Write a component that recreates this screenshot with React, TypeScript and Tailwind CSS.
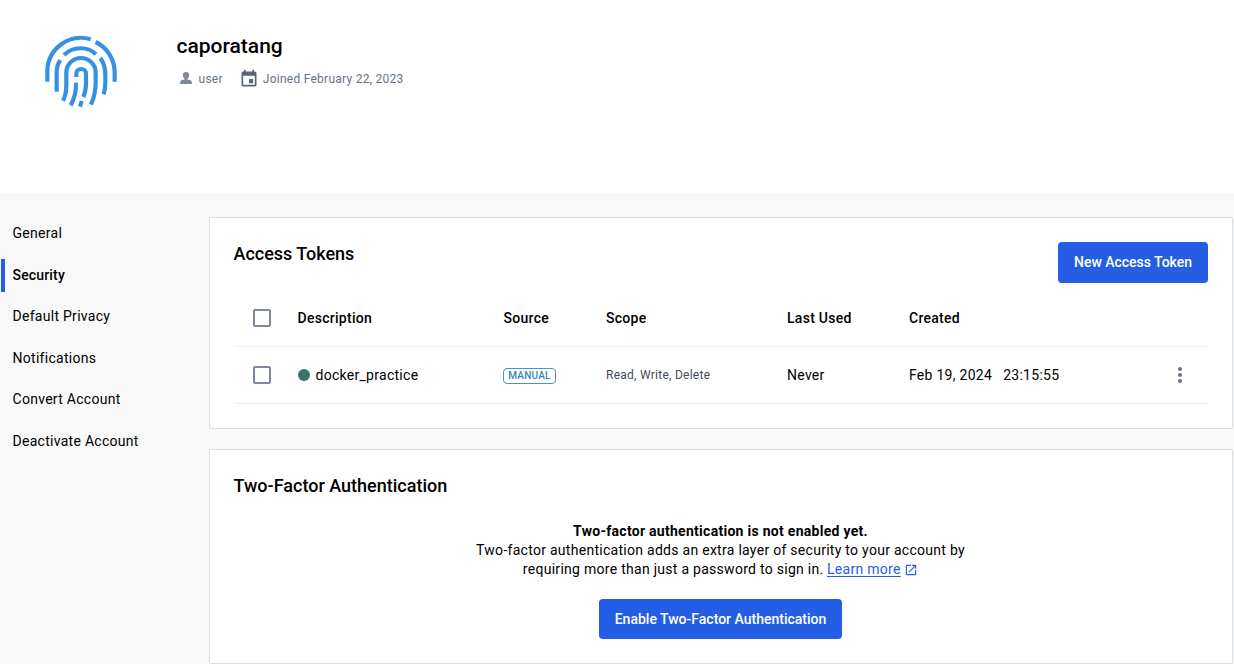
import type { ReactNode } from "react";
import { MdCheckBoxOutlineBlank, MdEvent, MdMoreVert, MdOpenInNew } from "react-icons/md";

const navItems = ["General", "Security", "Default Privacy", "Notifications", "Convert Account", "Deactivate Account"];

function Fingerprint() {
  return (
    <svg className="h-[76px] w-[76px]" viewBox="39 40 228 228" fill="none" stroke="#3590e6" strokeWidth="12.5">
      <path d="M52 186V155A101 101 0 0 1 182 59" />
      <path d="M197 67A101 101 0 0 1 254 155V186" />
      <path d="M102 106C128 80 173 79 198 104" />
      <path d="M91 122Q80 137 80 158V216" />
      <path d="M211 115C222 130 226 145 226 165V188Q226 208 221 224" />
      <path d="M99 243Q109 225 109 196V158A44 43 0 0 1 197 158V188C197 215 192 235 183 255" />
      <path d="M139 172V162A14.500 14 0 0 1 168 162V191Q168 215 160 232" />
      <path d="M138 189C139 218 133 238 122 257" />
      <path d="M155 244L150 261" />
    </svg>
  );
}

function UserIcon() {
  return (
    <svg className="h-3 w-3" viewBox="0 0 12 12" fill="#7f879b">
      <path d="M6 0C4.100 0 2.900 1.200 2.900 3.100 2.900 4.700 3.500 6 4.500 6.700V7.500L1.600 8.300C.6 8.600.2 9.300.2 10.200V12H11.800V10.200C11.800 9.300 11.400 8.600 10.400 8.300L7.500 7.500V6.700C8.500 6 9.100 4.700 9.100 3.100 9.100 1.200 7.900 0 6 0Z" />
    </svg>
  );
}

function Card({ className, children }: { className: string; children: ReactNode }) {
  return <section className={`rounded-[2px] border border-[#dcdde0] bg-white px-6 ${className}`}>{children}</section>;
}

function Checkbox() {
  return (
    <span className="flex pl-4">
      <MdCheckBoxOutlineBlank className="size-6 text-[#7f879e]" />
    </span>
  );
}

const rowClass =
  "grid h-[57px] grid-cols-[63.5px_206px_102.5px_181px_122px_1fr_56px] items-center border-b border-[#eeeff0]";

export default function App() {
  return (
    <div className="flex h-[664px] w-[1234px] flex-col overflow-hidden bg-[#f8f8f8] font-['Roboto',sans-serif] text-sm leading-[19px] tracking-[0.28px] text-black">
      <header className="flex h-[193px] shrink-0 bg-white pt-[33px] pl-[43px]">
        <Fingerprint />
        <div className="ml-[57.5px]">
          <h1 className="text-[21px] leading-[26px] font-medium tracking-[0px]">caporatang</h1>
          <div className="mt-[10px] flex items-center text-xs tracking-[0.26px] text-[#677285]">
            <span className="ml-[3px] flex pb-0.5">
              <UserIcon />
            </span>
            <span className="ml-[7px]">user</span>
            <MdEvent className="ml-4 size-5 text-[#5a6378]" />
            <span className="ml-1">Joined February 22, 2023</span>
          </div>
        </div>
      </header>
      <div className="flex flex-1 pt-6">
        <nav className="flex w-[209px] shrink-0 flex-col gap-2 pl-px">
          {navItems.map((item) => (
            <a
              key={item}
              className={
                item === "Security"
                  ? "flex h-[33.5px] items-center border-l-4 border-[#255ee4] pl-[7.5px] font-medium tracking-[0.17px]"
                  : "flex h-[33.5px] items-center border-l-4 border-transparent pl-[7.5px]"
              }
            >
              {item}
            </a>
          ))}
        </nav>
        <main className="flex w-[1024px] flex-col gap-5">
          <Card className="h-[212px] pt-6">
            <div className="flex h-12 items-start justify-between">
              <h2 className="-ml-[0.5px] text-lg leading-6 font-medium tracking-[-0.02px]">Access Tokens</h2>
              <button className="h-[41px] w-[150px] rounded bg-[#255ee4] font-medium tracking-[-0.02px] text-white">
                New Access Token
              </button>
            </div>
            <div className={`${rowClass} font-medium`}>
              <Checkbox />
              <span>Description</span>
              <span>Source</span>
              <span>Scope</span>
              <span>Last Used</span>
              <span>Created</span>
            </div>
            <div className={rowClass}>
              <Checkbox />
              <span className="flex items-center gap-[5.5px] pl-[0.5px]">
                <i className="size-3 rounded-full bg-[#3a766c]" />
                docker_practice
              </span>
              <span className="mt-0.5 -ml-[0.5px] flex h-4 w-[53px] items-center justify-center rounded-[4px] border border-[#4a90d6] bg-white pb-px text-[10px] font-medium tracking-[0.25px] text-[#3384d0]">
                MANUAL
              </span>
              <span className="text-xs tracking-[0.26px] text-[#444a59]">Read, Write, Delete</span>
              <span>Never</span>
              <span className="flex gap-[11px]">
                <span>Feb 19, 2024</span>
                <span>23:15:55</span>
              </span>
              <MdMoreVert className="ml-4 size-6 text-[#677285]" />
            </div>
          </Card>
          <Card className="h-[215px] pt-6">
            <h2 className="-ml-[0.5px] text-lg leading-6 font-medium tracking-[0px]">Two-Factor Authentication</h2>
            <div className="mt-6 flex flex-col items-center pr-px">
              <strong className="font-bold">Two-factor authentication is not enabled yet.</strong>
              <span>Two-factor authentication adds an extra layer of security to your account by</span>
              <span className="flex items-center">
                requiring more than just a password to sign in.
                <a className="ml-[3.5px] text-[#255ee4] underline underline-offset-2">Learn more</a>
                <MdOpenInNew className="ml-[3.5px] size-3.5 text-[#255ee4]" />
              </span>
              <button className="mt-5 h-10 w-[243px] rounded bg-[#255ee4] font-medium tracking-[0px] text-white">
                Enable Two-Factor Authentication
              </button>
            </div>
          </Card>
        </main>
      </div>
    </div>
  );
}
